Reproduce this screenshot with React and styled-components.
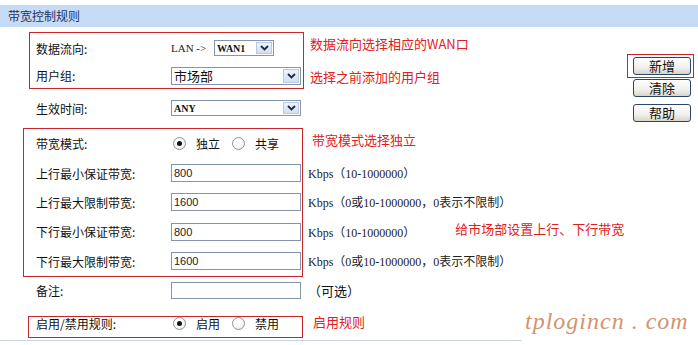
import React from 'react'
import styled, { createGlobalStyle } from 'styled-components'

const Global = createGlobalStyle`
  body {
    margin: 0;
    background: #fff;
    font-family: "Noto Sans CJK SC", sans-serif;
    color: #111;
  }
`

export const Page = styled.div`
  width: 698px;
  height: 345px;
  overflow: hidden;
`

export const TitleBar = styled.div`
  margin-top: 5px;
  height: 22px;
  line-height: 22px;
  background: #c6dbf6;
  padding-left: 8px;
  font-size: 12px;
  color: #1e3263;
`

export const TopArea = styled.div`
  display: flex;
  align-items: flex-start;
`

export const FormCol = styled.div`
  display: flex;
  flex-direction: column;
`

export const Section = styled.div`
  display: flex;
  align-items: flex-start;
  margin-top: ${p => p.$top || 0}px;
`

export const Frame = styled.div`
  box-sizing: border-box;
  border: 1px solid #c8242a;
  margin-left: ${p => p.$left}px;
  width: ${p => p.$w}px;
  padding-left: ${p => p.$pad}px;
  padding-bottom: ${p => p.$bottom || 0}px;
`

export const Row = styled.div`
  display: flex;
  align-items: center;
  height: ${p => p.$h}px;
  margin-left: ${p => p.$indent || 0}px;
  margin-top: ${p => p.$top || 0}px;
`

export const Label = styled.div`
  width: 135px;
  flex: none;
  font-size: 12px;
  white-space: nowrap;
`

export const Side = styled.div`
  display: flex;
  flex-direction: column;
  padding-left: ${p => p.$pad}px;
  padding-top: ${p => p.$top || 0}px;
  gap: ${p => p.$gap || 0}px;
`

export const SideRow = styled.div`
  display: flex;
  align-items: center;
  height: ${p => p.$h}px;
`

export const Note = styled.div`
  color: #e0201e;
  font-size: 13px;
  line-height: ${p => p.$lh || 16}px;
  white-space: nowrap;
  margin-left: ${p => p.$left || 0}px;
  padding-bottom: ${p => p.$raise || 0}px;
`

export const Hint = styled.div`
  font-family: "Liberation Serif", "Noto Sans CJK SC", serif;
  font-size: 12px;
  color: #222;
  white-space: nowrap;
`

export const Aside = styled.div`
  font-size: 13px;
  margin-left: 7px;
  white-space: nowrap;
`

export const LanText = styled.div`
  width: 43px;
  font-family: "Liberation Serif", serif;
  font-size: 11px;
  color: #222;
`

export const SelectBox = styled.div`
  box-sizing: border-box;
  display: flex;
  align-items: stretch;
  width: ${p => p.$w}px;
  height: ${p => p.$h}px;
  border: 1px solid #8595aa;
  background: #fff;
`

export const SelectValue = styled.div`
  flex: 1;
  display: flex;
  align-items: center;
  padding-left: 2px;
  font-family: ${p => (p.$cjk ? '"Noto Sans CJK SC", sans-serif' : '"Liberation Serif", serif')};
  font-size: ${p => (p.$cjk ? 13 : 10)}px;
  font-weight: ${p => (p.$cjk ? 400 : 700)};
  color: #111;
`

export const ArrowCell = styled.div`
  width: 16px;
  margin: 1px;
  box-sizing: border-box;
  border: 1px solid #b9c9e0;
  background: linear-gradient(#eef3fb, #d3dff0);
  display: flex;
  align-items: center;
  justify-content: center;
`

export const TextBox = styled.input`
  box-sizing: border-box;
  width: 130px;
  height: ${p => p.$h || 18}px;
  border: 1px solid #8595aa;
  padding: 0 2px;
  font-family: "Liberation Sans", Arial, sans-serif;
  font-size: 11px;
  color: #222;
  outline: none;
`

export const RadioSet = styled.div`
  display: flex;
  align-items: center;
  padding-left: 2px;
`

export const RadioCircle = styled.span`
  box-sizing: border-box;
  width: 13px;
  height: 13px;
  border-radius: 50%;
  border: 1px solid #8a97a5;
  background: radial-gradient(circle at 40% 40%, #fff 30%, #e2e2e2 100%);
  display: flex;
  align-items: center;
  justify-content: center;

  &::after {
    content: "";
    width: 5px;
    height: 5px;
    border-radius: 50%;
    background: ${p => (p.$on ? '#111' : 'transparent')};
  }
`

export const RadioText = styled.span`
  font-size: 12px;
  margin-left: 10px;
  margin-right: 12px;
`

export const ButtonCol = styled.div`
  display: flex;
  flex-direction: column;
  align-items: flex-end;
  margin-left: auto;
  margin-right: 4px;
  margin-top: 27px;
`

export const Highlight = styled.div`
  display: flex;
  border: 1px solid #c8242a;
  padding: 2px 2px 2px 5px;
`

export const Btn = styled.button`
  box-sizing: border-box;
  display: block;
  width: 58px;
  height: 18px;
  padding: 0;
  margin-top: ${p => p.$gap || 0}px;
  margin-right: ${p => p.$right || 0}px;
  border: 1px solid #2b4668;
  border-radius: 3px;
  background: linear-gradient(#ffffff, #f1f0ec 60%, #d9d4ca);
  font-family: "Noto Sans CJK SC", sans-serif;
  font-size: 13px;
  line-height: 16px;
  color: #111;
`

export const Footer = styled.div`
  display: flex;
  align-items: flex-start;
  margin-top: 11px;
`

export const FooterLeft = styled.div`
  width: 522px;
  flex: none;
  display: flex;
  flex-direction: column;
`

export const Rule = styled.div`
  margin-top: 2px;
  height: 1px;
  background: #c8d4e6;
`

export const Watermark = styled.div`
  margin-left: 3px;
  margin-top: -3px;
  font-family: "Liberation Serif", serif;
  font-style: italic;
  font-size: 24px;
  line-height: 16px;
  letter-spacing: 1px;
  color: #d49370;
  white-space: nowrap;
`

const Chevron = () => (
  <svg width="9" height="6" viewBox="0 0 9 6">
    <path d="M1 1 L4.5 4.5 L8 1" fill="none" stroke="#1b2a48" strokeWidth="1.8" />
  </svg>
)

const Select = ({ w, h, value, cjk }) => (
  <SelectBox $w={w} $h={h}>
    <SelectValue $cjk={cjk}>{value}</SelectValue>
    <ArrowCell>
      <Chevron />
    </ArrowCell>
  </SelectBox>
)

const Radios = ({ items, checked }) => (
  <RadioSet>
    {items.map(it => (
      <React.Fragment key={it}>
        <RadioCircle $on={it === checked} />
        <RadioText>{it}</RadioText>
      </React.Fragment>
    ))}
  </RadioSet>
)

const bwRows = [
  { label: '上行最小保证带宽:', value: '800', hint: 'Kbps（10-1000000）' },
  { label: '上行最大限制带宽:', value: '1600', hint: 'Kbps（0或10-1000000，0表示不限制）' },
  { label: '下行最小保证带宽:', value: '800', hint: 'Kbps（10-1000000）', note: '给市场部设置上行、下行带宽' },
  { label: '下行最大限制带宽:', value: '1600', hint: 'Kbps（0或10-1000000，0表示不限制）' },
]

const RH = 29.4

export default function App() {
  return (
    <Page>
      <Global />
      <TitleBar>带宽控制规则</TitleBar>

      <TopArea>
        <FormCol>
          <Section $top={5}>
            <Frame $left={29} $w={275} $pad={6}>
              <Row $h={30}>
                <Label>数据流向:</Label>
                <LanText>LAN -&gt;</LanText>
                <Select w={60} h={16} value="WAN1" />
              </Row>
              <Row $h={25}>
                <Label>用户组:</Label>
                <Select w={130} h={18} value="市场部" cjk />
              </Row>
            </Frame>
            <Side $pad={6} $top={4} $gap={17}>
              <Note>数据流向选择相应的WAN口</Note>
              <Note>选择之前添加的用户组</Note>
            </Side>
          </Section>

          <Row $h={30} $indent={36} $top={4}>
            <Label>生效时间:</Label>
            <Select w={130} h={16} value="ANY" />
          </Row>
        </FormCol>

        <ButtonCol>
          <Highlight>
            <Btn>新增</Btn>
          </Highlight>
          <Btn $gap={1} $right={3}>清除</Btn>
          <Btn $gap={7} $right={3}>帮助</Btn>
        </ButtonCol>
      </TopArea>

      <Section $top={5}>
        <Frame $left={23} $w={280} $pad={12}>
          <Row $h={RH}>
            <Label>带宽模式:</Label>
            <Radios items={['独立', '共享']} checked="独立" />
          </Row>
          {bwRows.map(r => (
            <Row $h={RH} key={r.label}>
              <Label>{r.label}</Label>
              <TextBox readOnly value={r.value} />
            </Row>
          ))}
        </Frame>
        <Side $pad={5} $top={1}>
          <SideRow $h={RH}>
            <Note $left={4} $raise={8}>带宽模式选择独立</Note>
          </SideRow>
          {bwRows.map(r => (
            <SideRow $h={RH} key={r.label}>
              <Hint>{r.hint}</Hint>
              {r.note && <Note $left={40} $raise={6}>{r.note}</Note>}
            </SideRow>
          ))}
        </Side>
      </Section>

      <Row $h={28} $indent={36}>
        <Label>备注:</Label>
        <TextBox readOnly value="" $h={17} />
        <Aside>（可选）</Aside>
      </Row>

      <Footer>
        <FooterLeft>
          <Section>
            <Frame $left={28} $w={275} $pad={7} $bottom={6}>
              <Row $h={14}>
                <Label>启用/禁用规则:</Label>
                <Radios items={['启用', '禁用']} checked="启用" />
              </Row>
            </Frame>
            <Side $pad={10}>
              <Note $lh={12}>启用规则</Note>
            </Side>
          </Section>
          <Rule />
        </FooterLeft>
        <Watermark>tplogincn . com</Watermark>
      </Footer>
    </Page>
  )
}
